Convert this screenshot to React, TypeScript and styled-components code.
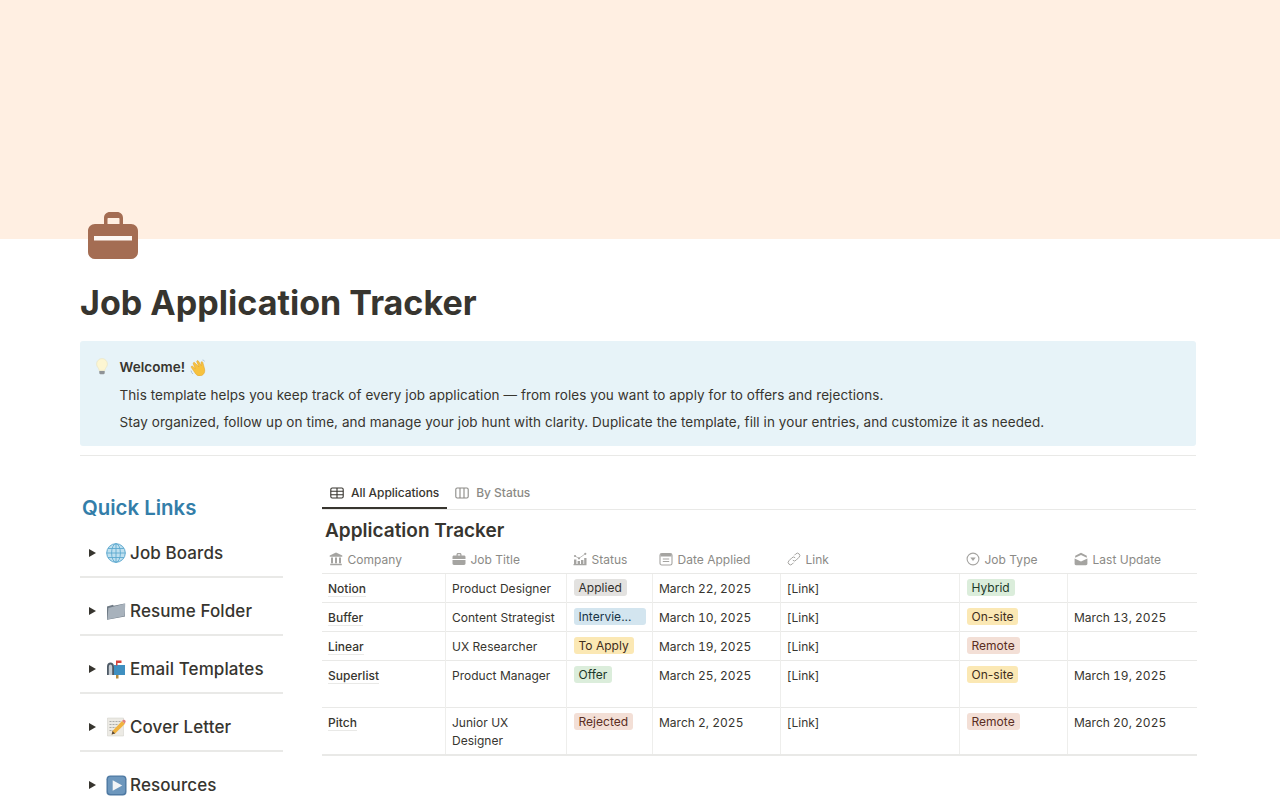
import React from 'react';
import styled, { createGlobalStyle } from 'styled-components';

const GlobalStyle = createGlobalStyle`
  html, body {
    margin: 0;
    padding: 0;
    background: #fff;
    font-family: Inter, "Liberation Sans", sans-serif;
    color: #37352f;
    overflow: hidden;
  }
`;

const Briefcase = () => (
  <svg width="50" height="49" viewBox="0 0 50 49">
    <path
      fill="#a46d53"
      fillRule="evenodd"
      d="M16 13V7c0-3.500 2.500-6 6-6h7c3.500 0 6 2.500 6 6v6h8c4 0 7 3 7 7v21c0 4-3 7-7 7H7c-4 0-7-3-7-7V20c0-4 3-7 7-7h9zm3.500 0h12V8c0-.6-.4-1-1-1h-10c-.6 0-1 .4-1 1z"
    />
    <rect x="6" y="25" width="38" height="4.500" fill="#fdf8f4" />
  </svg>
);

const Bulb = () => (
  <svg width="12" height="17" viewBox="0 0 12 17">
    <path fill="#fdf6d2" stroke="#e9e2bd" strokeWidth=".6" d="M6 .6a5.400 5.400 0 0 0-5.400 5.400c0 2.100 1.300 3.200 2 4.600.3.600.4 1.200.4 1.800h6c0-.6.100-1.200.4-1.800.7-1.400 2-2.500 2-4.600A5.400 5.400 0 0 0 6 .6z" />
    <path fill="#8f9397" d="M3.300 13h5.400v2c0 .6-.5 1.200-1.100 1.200H4.400c-.6 0-1.100-.6-1.100-1.200z" />
  </svg>
);

const Wave = () => (
  <svg width="17" height="17" viewBox="0 0 17 17">
    <path fill="#f7c23e" stroke="#e09f27" strokeWidth=".5" d="M4.500 3.500 9 8 6.800 2.900c-.5-1.100 1-1.800 1.600-.8l3 4.600-.4-3c-.1-1.200 1.500-1.500 1.800-.3l1.800 6.600c.7 3-.7 5.500-2.900 6.500-2.300 1-4.500.2-6-1.600L1.400 8.600c-.8-1 .5-2.100 1.400-1.200l2.500 2.400-2-4.800c-.5-1 .7-2 1.200-1.500z" />
    <path fill="none" stroke="#9fb4c9" strokeWidth=".8" d="M1 11.500c.2 1.500 1 2.700 2 3.500M12.500 1c.9.100 1.700.6 2.200 1.300" />
  </svg>
);

const Globe = () => (
  <svg width="20" height="20" viewBox="0 0 20 20">
    <circle cx="10" cy="10" r="9.300" fill="#bfe0ef" stroke="#5ea9cf" strokeWidth="1" />
    <g fill="none" stroke="#5ea9cf" strokeWidth=".9">
      <ellipse cx="10" cy="10" rx="4.400" ry="9.300" />
      <path d="M10 .7v18.600M.7 10h18.600M2 5.500h16M2 14.500h16" />
    </g>
  </svg>
);

const Folder = () => (
  <svg width="20" height="20" viewBox="0 0 20 20">
    <path fill="#6f7a85" d="M1 5.500 7 3.800l.7 1 11-2.400.3 13-18 3.300z" />
    <path fill="#a8b2bc" d="M2.400 7 19.300 2.600 18.600 15 1.400 18.600z" />
  </svg>
);

const Mailbox = () => (
  <svg width="20" height="20" viewBox="0 0 20 20">
    <path fill="#4e5a66" d="M1 16V7.500C1 5 2.500 3.500 4.500 3.500S8 5 8 7.500V16z" />
    <path fill="#c6cdd3" d="M2.800 16V8c0-1.500.7-2.500 1.700-2.500S6.200 6.500 6.200 8v8z" />
    <path fill="#3f8fc0" d="M8 6h11v10H8z" />
    <path fill="#d7433a" d="M10 1.500h1.500v5H10zM11.500 1.500h4v2.600h-4z" />
    <path fill="#b58a3c" d="M10 16h2.500v3.500H10z" />
  </svg>
);

const Memo = () => (
  <svg width="20" height="20" viewBox="0 0 20 20">
    <path fill="#eceae4" stroke="#cfcdc7" strokeWidth=".5" d="M1.500 1h16v18h-16z" />
    <path stroke="#9a9a98" strokeWidth=".8" strokeDasharray="2 1" d="M3.500 4.500h11M3.500 7.500h9M3.500 10.500h7M3.500 13.500h5" />
    <path fill="#f0b23e" d="m6.500 14 9.500-10 3 2.800-9.800 9.800-3.600 1z" />
    <path fill="#e07f7f" d="m16 4 1-1c.5-.5 1.200-.5 1.700 0l.6.600c.5.5.5 1.200 0 1.700L19 6.800z" />
    <path fill="#5a4a3a" d="m6.500 14-.9 3.600 3.600-1z" />
  </svg>
);

const PlayBox = () => (
  <svg width="21" height="21" viewBox="0 0 22 22">
    <rect x=".5" y=".5" width="21" height="21" rx="4" fill="#4f7aa3" />
    <rect x="2" y="1.800" width="18" height="18" rx="3" fill="#6d97bd" />
    <path fill="#f2f4f6" d="M7 5.500 17 11 7 16.500z" />
  </svg>
);

const TableIcon = () => (
  <svg width="14" height="14" viewBox="0 0 14 14" fill="none" stroke="#37352f" strokeWidth="1.100">
    <rect x=".8" y="2" width="12.400" height="10" rx="1.400" />
    <path d="M.8 5.300h12.400M.8 8.700h12.400M7 2v10" />
  </svg>
);

const BoardIcon = () => (
  <svg width="14" height="14" viewBox="0 0 14 14" fill="none" stroke="#8b8a86" strokeWidth="1.100">
    <rect x=".8" y="2" width="12.400" height="10" rx="1.400" />
    <path d="M5 2v10M9 2v10" />
  </svg>
);

const BankIcon = () => (
  <svg width="14" height="14" viewBox="0 0 14 14" fill="#a5a4a1">
    <path d="M7 .6 13.300 3.600v1.100H.7V3.600z" />
    <path d="M2 5.500h2v5.800H2zM6 5.500h2v5.800H6zM10 5.500h2v5.800h-2zM1.200 11.800h11.600v1.500H1.200z" />
  </svg>
);

const CaseIcon = () => (
  <svg width="14" height="14" viewBox="0 0 14 14" fill="#a5a4a1">
    <path
      fillRule="evenodd"
      d="M4.500 2.600C4.500 1.600 5.100 1 6 1h2c.9 0 1.500.6 1.500 1.600V3.500h2.600c.8 0 1.400.6 1.400 1.400v6.700c0 .8-.6 1.400-1.400 1.400H1.900c-.8 0-1.400-.6-1.400-1.400V4.900c0-.8.6-1.400 1.400-1.400h2.600zm1.200.9h2.600v-.8c0-.3-.1-.5-.5-.5H6.200c-.4 0-.5.200-.5.500zM.5 7v1h13V7z"
    />
  </svg>
);

const ChartIcon = () => (
  <svg width="14" height="14" viewBox="0 0 14 14" fill="#a5a4a1">
    <path d="M.5 12h13v1.300H.5zM1 7.500h2.400V12H1zM4.600 9h2.400v3H4.600zM8 8h2.400v4H8zM11.200 6h2.300v6h-2.300z" />
    <circle cx="2" cy="4" r="1.100" />
    <circle cx="6" cy="6.300" r="1.100" />
    <circle cx="12.300" cy="1.800" r="1.100" />
    <path fill="none" stroke="#a5a4a1" strokeWidth=".7" d="m2 4 4 2.300 6.300-4.500" />
  </svg>
);

const CalendarIcon = () => (
  <svg width="14" height="14" viewBox="0 0 14 14">
    <rect x="1" y="1.500" width="12" height="11.500" rx="1.800" fill="none" stroke="#a5a4a1" strokeWidth="1.100" />
    <path fill="#a5a4a1" d="M1.500 2h11v2.500h-11zM3.800 6.500h6.400v1H3.800zM3.800 9h6.400v1H3.800z" />
  </svg>
);

const LinkIcon = () => (
  <svg width="14" height="14" viewBox="0 0 14 14" fill="none" stroke="#a5a4a1" strokeWidth="1">
    <path d="M5.800 8.200a2.300 2.300 0 0 0 3.300 0l3-3a2.300 2.300 0 0 0-3.300-3.300L7.400 3.300" />
    <path d="M8.200 5.800a2.300 2.300 0 0 0-3.300 0l-3 3a2.300 2.300 0 0 0 3.300 3.300l1.400-1.400" />
  </svg>
);

const SelectIcon = () => (
  <svg width="14" height="14" viewBox="0 0 14 14">
    <circle cx="7" cy="7" r="5.900" fill="none" stroke="#a5a4a1" strokeWidth="1.100" />
    <path fill="#a5a4a1" d="M4.300 5.600h5.400L7 9z" />
  </svg>
);

const InboxIcon = () => (
  <svg width="14" height="14" viewBox="0 0 14 14" fill="#a5a4a1">
    <path d="M7 .8 12.800 3.800v2L7 3 1.200 5.800v-2z" />
    <path d="M.6 6.500 7 9.600l6.400-3.100v5.300c0 .8-.6 1.400-1.400 1.400H2c-.8 0-1.400-.6-1.400-1.400z" />
  </svg>
);

type TagTone = 'gray' | 'blue' | 'yellow' | 'green' | 'red';

const tagColors: Record<TagTone, { bg: string; fg: string }> = {
  gray: { bg: '#e3e2e0', fg: '#32302c' },
  blue: { bg: '#d3e5ef', fg: '#183347' },
  yellow: { bg: '#fbe8b4', fg: '#402c1b' },
  green: { bg: '#dbeddb', fg: '#1c3829' },
  red: { bg: '#f3dfd6', fg: '#5a2d22' },
};

type Row = {
  company: string;
  title: string;
  status: string;
  statusTone: TagTone;
  wide?: boolean;
  applied: string;
  jobType: string;
  typeTone: TagTone;
  update: string;
  height: number;
};

const rows: Row[] = [
  { company: 'Notion', title: 'Product Designer', status: 'Applied', statusTone: 'gray', applied: 'March 22, 2025', jobType: 'Hybrid', typeTone: 'green', update: '', height: 29 },
  { company: 'Buffer', title: 'Content Strategist', status: 'Intervie...', statusTone: 'blue', wide: true, applied: 'March 10, 2025', jobType: 'On-site', typeTone: 'yellow', update: 'March 13, 2025', height: 29 },
  { company: 'Linear', title: 'UX Researcher', status: 'To Apply', statusTone: 'yellow', applied: 'March 19, 2025', jobType: 'Remote', typeTone: 'red', update: '', height: 29 },
  { company: 'Superlist', title: 'Product Manager', status: 'Offer', statusTone: 'green', applied: 'March 25, 2025', jobType: 'On-site', typeTone: 'yellow', update: 'March 19, 2025', height: 47 },
  { company: 'Pitch', title: 'Junior UX Designer', status: 'Rejected', statusTone: 'red', applied: 'March 2, 2025', jobType: 'Remote', typeTone: 'red', update: 'March 20, 2025', height: 47 },
];

const columns = [
  { label: 'Company', icon: <BankIcon />, width: 123 },
  { label: 'Job Title', icon: <CaseIcon />, width: 121 },
  { label: 'Status', icon: <ChartIcon />, width: 86 },
  { label: 'Date Applied', icon: <CalendarIcon />, width: 128 },
  { label: 'Link', icon: <LinkIcon />, width: 179 },
  { label: 'Job Type', icon: <SelectIcon />, width: 108 },
  { label: 'Last Update', icon: <InboxIcon />, width: 130 },
];

const links = [
  { label: 'Job Boards', icon: <Globe /> },
  { label: 'Resume Folder', icon: <Folder /> },
  { label: 'Email Templates', icon: <Mailbox /> },
  { label: 'Cover Letter', icon: <Memo /> },
  { label: 'Resources', icon: <PlayBox /> },
];

const App = () => {
  return (
    <S.Page>
      <GlobalStyle />
      <S.Banner />
      <S.Content>
        <S.PageIcon>
          <Briefcase />
        </S.PageIcon>
        <S.Title>Job Application Tracker</S.Title>
        <S.Callout>
          <S.CalloutIcon>
            <Bulb />
          </S.CalloutIcon>
          <S.CalloutBody>
            <S.CalloutHead>
              Welcome! <Wave />
            </S.CalloutHead>
            <S.CalloutLine>
              This template helps you keep track of every job application — from roles you want to apply for to offers and rejections.
            </S.CalloutLine>
            <S.CalloutLine>
              Stay organized, follow up on time, and manage your job hunt with clarity. Duplicate the template, fill in your entries, and customize it as needed.
            </S.CalloutLine>
          </S.CalloutBody>
        </S.Callout>
        <S.Divider />
        <S.Columns>
          <S.Sidebar>
            <S.SidebarTitle>Quick Links</S.SidebarTitle>
            {links.map((link) => (
              <S.LinkRow key={link.label}>
                <S.Arrow />
                <S.LinkIcon>{link.icon}</S.LinkIcon>
                {link.label}
              </S.LinkRow>
            ))}
          </S.Sidebar>
          <S.Main>
            <S.Tabs>
              <S.Tab $active>
                <TableIcon />
                All Applications
              </S.Tab>
              <S.Tab>
                <BoardIcon />
                By Status
              </S.Tab>
            </S.Tabs>
            <S.TableTitle>Application Tracker</S.TableTitle>
            <S.Table>
              <colgroup>
                {columns.map((col) => (
                  <col key={col.label} width={col.width} />
                ))}
              </colgroup>
              <thead>
                <tr>
                  {columns.map((col) => (
                    <S.HeadCell key={col.label}>
                      <S.HeadInner>
                        {col.icon}
                        {col.label}
                      </S.HeadInner>
                    </S.HeadCell>
                  ))}
                </tr>
              </thead>
              <tbody>
                {rows.map((row) => (
                  <S.BodyRow key={row.company} $height={row.height}>
                    <S.Cell>
                      <S.Company>{row.company}</S.Company>
                    </S.Cell>
                    <S.Cell>{row.title}</S.Cell>
                    <S.TagCell>
                      <S.Tag $tone={row.statusTone} $wide={row.wide}>{row.status}</S.Tag>
                    </S.TagCell>
                    <S.DateCell>{row.applied}</S.DateCell>
                    <S.Cell>[Link]</S.Cell>
                    <S.TagCell>
                      <S.Tag $tone={row.typeTone}>{row.jobType}</S.Tag>
                    </S.TagCell>
                    <S.DateCell>{row.update}</S.DateCell>
                  </S.BodyRow>
                ))}
              </tbody>
            </S.Table>
          </S.Main>
        </S.Columns>
      </S.Content>
    </S.Page>
  );
};

const cellBase = `
  padding: 6px 6px 0 6.5px;
  vertical-align: top;
  line-height: 18px;
  border-top: 1px solid #e9e9e7;
  border-left: 1px solid #eeeeec;
`;

const S = {
  Page: styled.div`
    width: 1280px;
    height: 800px;
    overflow: hidden;
  `,
  Banner: styled.div`
    height: 239px;
    background: #ffefe2;
  `,
  Content: styled.div`
    padding: 0 84px 0 80px;
  `,
  PageIcon: styled.div`
    margin: -28px 0 0 8px;
    height: 49px;
    position: relative;
  `,
  Title: styled.h1`
    margin: 21px 0 0;
    font-size: 34.1px;
    line-height: 44px;
    font-weight: 700;
    color: #37352f;
  `,
  Callout: styled.div`
    margin-top: 16px;
    display: flex;
    height: 105px;
    box-sizing: border-box;
    padding: 11px 12px 0 15px;
    background: #e7f3f8;
    border-radius: 3px;
  `,
  CalloutIcon: styled.div`
    width: 23.5px;
    padding: 6px 0 0 1px;
    flex: none;
  `,
  CalloutBody: styled.div`
    display: flex;
    flex-direction: column;
  `,
  CalloutHead: styled.div`
    display: flex;
    align-items: center;
    gap: 5px;
    height: 30px;
    font-size: 13.5px;
    letter-spacing: 0.07px;
    font-weight: 600;
  `,
  CalloutLine: styled.div`
    height: 27px;
    line-height: 27px;
    font-size: 13.5px;
    letter-spacing: 0.07px;
    white-space: nowrap;
  `,
  Divider: styled.div`
    margin-top: 9px;
    height: 1px;
    background: #e9e9e7;
  `,
  Columns: styled.div`
    display: flex;
    margin-top: 20px;
  `,
  Sidebar: styled.div`
    width: 203px;
    flex: none;
    padding-top: 19px;
  `,
  SidebarTitle: styled.div`
    margin-left: 2px;
    font-size: 20.4px;
    line-height: 25px;
    font-weight: 600;
    color: #337ea9;
  `,
  LinkRow: styled.div`
    display: flex;
    align-items: center;
    height: 58px;
    padding: 10px 0 0 9px;
    font-size: 17px;
    letter-spacing: 0.1px;
    font-weight: 500;
    color: #37352f;
    border-bottom: 2px solid #e9e9e7;
    box-sizing: border-box;
    &:last-child {
      padding-top: 8px;
      border-bottom: none;
    }
  `,
  Arrow: styled.span`
    width: 0;
    height: 0;
    margin-right: 10px;
    border-style: solid;
    border-width: 4px 0 4px 7px;
    border-color: transparent transparent transparent #37352f;
  `,
  LinkIcon: styled.span`
    width: 24px;
    display: flex;
    align-items: center;
    flex: none;
  `,
  Main: styled.div`
    margin-left: 39px;
    flex: 1;
    min-width: 0;
  `,
  Tabs: styled.div`
    display: flex;
    height: 33px;
    border-bottom: 1px solid #e9e9e7;
  `,
  Tab: styled.div<{ $active?: boolean }>`
    display: flex;
    align-items: center;
    gap: 7px;
    height: 33px;
    padding: 0 8px;
    font-size: 12px;
    letter-spacing: -0.05px;
    font-weight: 500;
    color: ${({ $active }) => ($active ? '#37352f' : '#8b8a86')};
    box-shadow: ${({ $active }) => ($active ? 'inset 0 -2px 0 #37352f' : 'none')};
  `,
  TableTitle: styled.div`
    margin: 8px 0 0 3px;
    font-size: 19px;
    line-height: 26px;
    font-weight: 600;
    color: #37352f;
  `,
  Table: styled.table`
    margin-top: 1px;
    width: 875px;
    table-layout: fixed;
    border-collapse: collapse;
    font-size: 12px;
    letter-spacing: 0.02px;
    color: #37352f;
    border-bottom: 2px solid #e9e9e7;
  `,
  HeadCell: styled.th`
    height: 28px;
    padding: 0 7px;
    font-weight: 400;
    text-align: left;
    color: #8b8a86;
    border-bottom: 1px solid #e9e9e7;
  `,
  HeadInner: styled.div`
    display: flex;
    align-items: center;
    gap: 4.5px;
  `,
  BodyRow: styled.tr<{ $height: number }>`
    height: ${({ $height }) => $height}px;
  `,
  Cell: styled.td`
    ${cellBase}
    &:first-child {
      border-left: none;
      padding-left: 6px;
    }
  `,
  DateCell: styled.td`
    ${cellBase}
    font-variant-numeric: tabular-nums;
    letter-spacing: 0;
  `,
  TagCell: styled.td`
    padding: 5px 6px 0 7px;
    vertical-align: top;
    border-top: 1px solid #e9e9e7;
    border-left: 1px solid #eeeeec;
  `,
  Company: styled.span`
    font-weight: 500;
    border-bottom: 1px solid #e9e9e7;
  `,
  Tag: styled.span<{ $tone: TagTone; $wide?: boolean }>`
    display: ${({ $wide }) => ($wide ? 'block' : 'inline-block')};
    padding: 0 5px;
    height: 17px;
    line-height: 17px;
    border-radius: 3px;
    white-space: nowrap;
    background: ${({ $tone }) => tagColors[$tone].bg};
    color: ${({ $tone }) => tagColors[$tone].fg};
  `,
};

export default App;
